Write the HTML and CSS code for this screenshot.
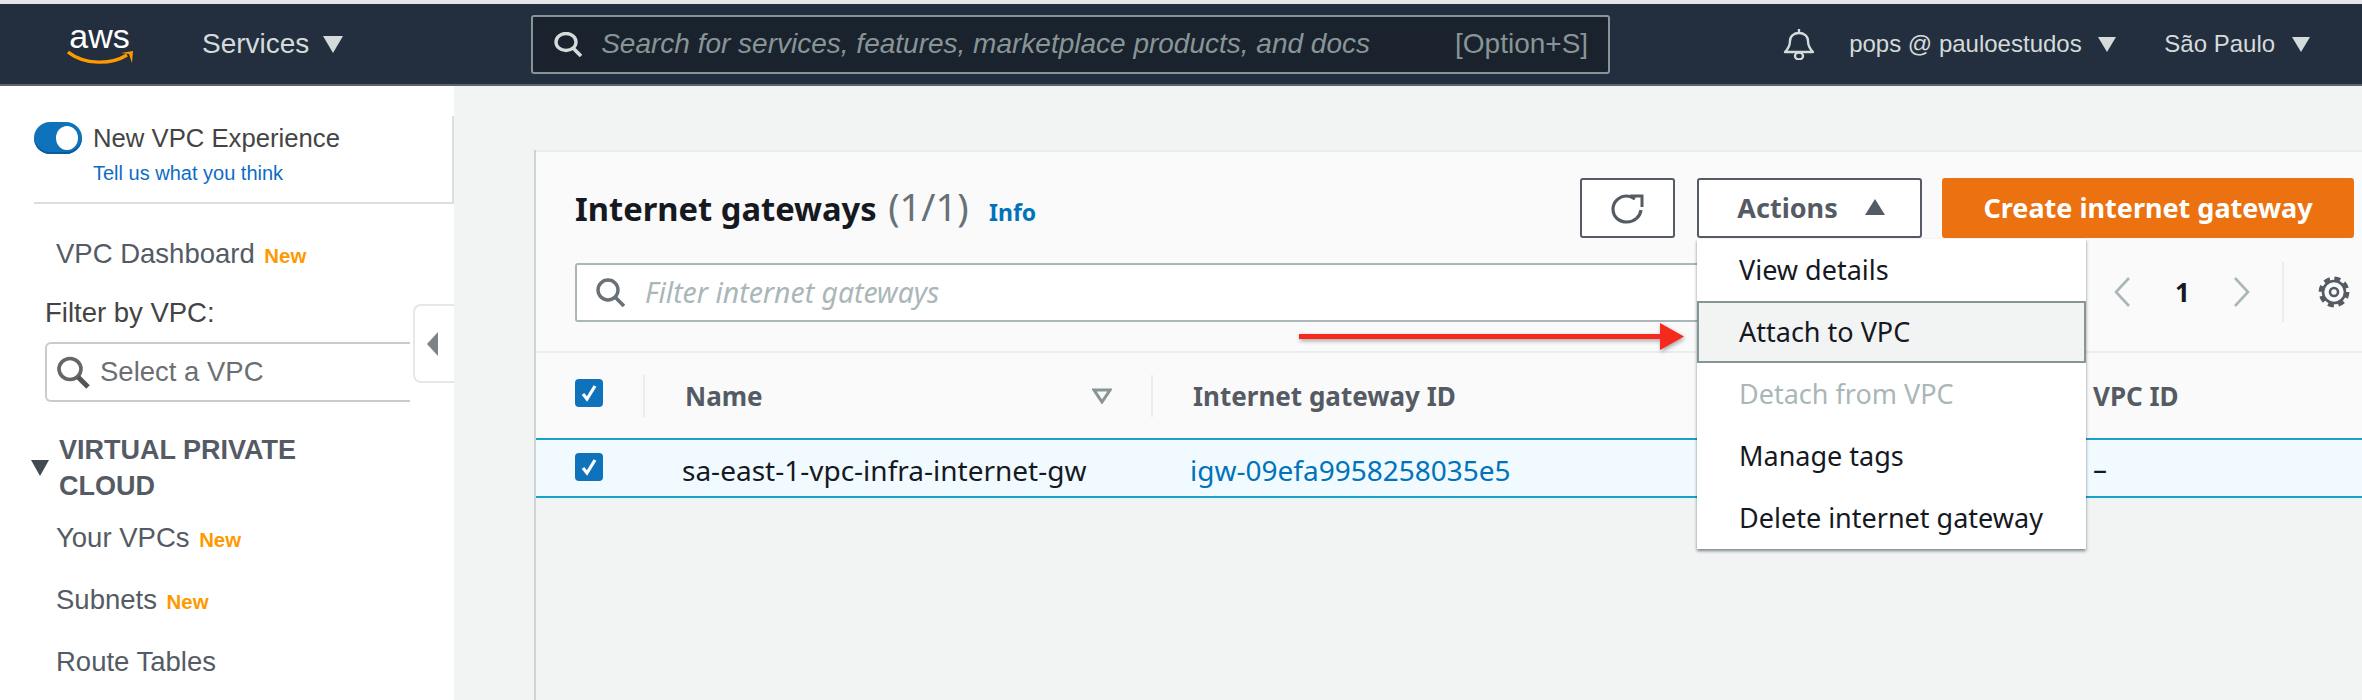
FILE: index.html
```html
<!DOCTYPE html>
<html lang="en">
<head>
<meta charset="UTF-8">
<meta name="viewport" content="width=device-width, initial-scale=1.0">
<title>Internet gateways</title>
<link rel="stylesheet" href="styles.css">
</head>
<body>

<header class="topnav">
  <a class="logo">
    <span class="logo-text">aws</span>
    <svg class="logo-smile" viewBox="0 0 67 15"><path d="M1 2C18 15 44 15 60 5" fill="none" stroke="#f90" stroke-width="3.4"/><path d="M54 3L66 1L65 13L62 4Z" fill="#f90"/></svg>
  </a>
  <div class="nav-services">Services <span class="caret caret-big"></span></div>
  <div class="nav-search">
    <svg class="nav-search-icon" viewBox="0 0 29 25"><ellipse cx="12" cy="10" rx="10" ry="8.5" fill="none" stroke="#d5dbdb" stroke-width="3.4"/><path d="M19 16L27 24" stroke="#d5dbdb" stroke-width="3.6"/></svg>
    <span class="nav-search-text">Search for services, features, marketplace products, and docs</span>
    <span class="nav-search-hint">[Option+S]</span>
  </div>
  <svg class="nav-bell" viewBox="0 0 34 32"><path d="M17 1V5M3 24C7 20 8 17 8 13C8 8 12 5 17 5C22 5 26 8 26 13C26 17 27 20 31 24Z" fill="none" stroke="#d5dbdb" stroke-width="2.4" stroke-linejoin="round"/><ellipse cx="17" cy="28" rx="4" ry="3.4" fill="none" stroke="#d5dbdb" stroke-width="2.4"/></svg>
  <div class="nav-user">pops @ pauloestudos <span class="caret"></span></div>
  <div class="nav-region">São Paulo <span class="caret"></span></div>
  <div class="nav-support">Support</div>
</header>

<div class="layout">
  <aside class="sidebar">
    <div class="vpc-experience">
      <div class="toggle-row">
        <span class="toggle"><span class="toggle-knob"></span></span>
        <span>New VPC Experience</span>
      </div>
      <a class="feedback">Tell us what you think</a>
    </div>

    <div class="side-link side-dashboard">VPC Dashboard <span class="new">New</span></div>
    <div class="filter-label">Filter by VPC:</div>
    <div class="vpc-select">
      <svg class="vpc-select-icon" viewBox="0 0 34 33"><ellipse cx="14" cy="13" rx="11" ry="10.5" fill="#fff" stroke="#666" stroke-width="3.6"/><path d="M22 21L32 31" stroke="#555" stroke-width="5"/></svg>
      <span>Select a VPC</span>
    </div>

    <div class="side-section">
      <span class="section-arrow"></span>
      <span class="section-title">VIRTUAL PRIVATE CLOUD</span>
    </div>
    <div class="side-link side-first">Your VPCs <span class="new">New</span></div>
    <div class="side-link">Subnets <span class="new">New</span></div>
    <div class="side-link">Route Tables</div>

    <div class="collapse-tab"><span class="collapse-arrow"></span></div>
  </aside>

  <main class="content">
    <section class="panel">
      <div class="panel-head">
        <div class="title-row">
          <h1 class="title">Internet gateways <span class="count">(1/1)</span> <a class="info">Info</a></h1>
          <div class="actions">
            <button class="btn btn-refresh">
              <svg viewBox="0 0 33 31" width="33" height="31"><path d="M24 6C21 4 18 3 16 3C8 3 2 9 2 16C2 24 8 29 16 29C23 29 29 24 30 17" fill="none" stroke="#545b64" stroke-width="3.2"/><path d="M19 3H31V14" fill="none" stroke="#545b64" stroke-width="3"/></svg>
            </button>
            <div class="dropdown">
              <button class="btn btn-actions">Actions <span class="caret-up"></span></button>
              <ul class="menu">
                <li>View details</li>
                <li class="menu-active">Attach to VPC</li>
                <li class="menu-disabled">Detach from VPC</li>
                <li>Manage tags</li>
                <li>Delete internet gateway</li>
              </ul>
            </div>
            <button class="btn btn-primary">Create internet gateway</button>
          </div>
        </div>

        <div class="filter-row">
          <div class="filter-input">
            <svg class="filter-icon" viewBox="0 0 29 29"><ellipse cx="12" cy="12" rx="10" ry="10" fill="none" stroke="#687078" stroke-width="3.4"/><path d="M19 19L28 28" stroke="#687078" stroke-width="3.6"/></svg>
            <span>Filter internet gateways</span>
          </div>
          <div class="pager">
            <svg class="chevron" viewBox="0 0 17 30"><path d="M15 1L2 15L15 29" fill="none" stroke="#aab7b8" stroke-width="2.6"/></svg>
            <span class="page-num">1</span>
            <svg class="chevron" viewBox="0 0 17 30"><path d="M2 1L15 15L2 29" fill="none" stroke="#aab7b8" stroke-width="2.6"/></svg>
            <span class="pager-sep"></span>
            <svg class="gear" viewBox="0 0 32 32"><circle cx="16" cy="16" r="11" fill="none" stroke="#545b64" stroke-width="2.6"/><circle cx="16" cy="16" r="13.4" fill="none" stroke="#545b64" stroke-width="4" stroke-dasharray="6 4.52"/><circle cx="16" cy="16" r="4" fill="none" stroke="#545b64" stroke-width="2.6"/></svg>
          </div>
        </div>
      </div>

      <div class="table-row table-head">
        <div class="cell-check"><span class="checkbox"><svg viewBox="0 0 28 28"><path d="M8 15L12 20L20 7" fill="none" stroke="#fff" stroke-width="3.2"/></svg></span></div>
        <div class="cell cell-name">Name <svg class="sort" viewBox="0 0 20 16"><path d="M2 2H18L10 14Z" fill="none" stroke="#879596" stroke-width="3"/></svg></div>
        <div class="cell cell-id">Internet gateway ID</div>
        <div class="cell-vpc">VPC ID</div>
      </div>

      <div class="table-row table-selected">
        <div class="cell-check"><span class="checkbox"><svg viewBox="0 0 28 28"><path d="M8 15L12 20L20 7" fill="none" stroke="#fff" stroke-width="3.2"/></svg></span></div>
        <div class="cell">sa-east-1-vpc-infra-internet-gw</div>
        <div class="cell"><a class="link">igw-09efa9958258035e5</a></div>
        <div class="cell-vpc">–</div>
      </div>

      <svg class="red-arrow" viewBox="0 0 385 27" width="385" height="27"><path d="M0 11H361V0L385 13.5L361 27V16H0Z" fill="#f5291c"/></svg>
    </section>
  </main>
</div>

</body>
</html>
```
FILE: styles.css
```css
html, body {
  margin: 0;
  height: 100%;
  overflow: hidden;
}
body {
  font-family: "Liberation Sans", Arial, sans-serif;
  background-color: #e4e6e8;
  padding-top: 4px;
  box-sizing: border-box;
}

/* top bar */
.topnav {
  display: flex;
  align-items: center;
  height: 80px;
  background-color: #232f3e;
  border-bottom: 2px solid #5b6570;
  color: #d5dbdb;
  white-space: nowrap;
}
.topnav > * {
  flex: none;
}
.logo {
  position: relative;
  display: block;
  width: 67px;
  height: 41px;
  margin-left: 67px;
}
.logo-text {
  display: block;
  font-size: 34px;
  line-height: 24px;
  color: #fff;
  text-align: center;
  margin-left: -2px;
}
.logo-smile {
  display: block;
  width: 67px;
  height: 15px;
  margin-top: 2px;
}
.nav-services {
  margin-left: 68px;
  font-size: 28px;
}
.caret {
  display: inline-block;
  width: 0;
  height: 0;
  margin-left: 10px;
  border-left: 9px solid transparent;
  border-right: 9px solid transparent;
  border-top: 15px solid #d5dbdb;
}
.caret-big {
  border-left-width: 10px;
  border-right-width: 10px;
  border-top-width: 17px;
  margin-left: 6px;
}
.nav-search {
  display: flex;
  align-items: center;
  width: 1079px;
  height: 59px;
  margin-left: 188px;
  padding: 0 20px 0 21px;
  box-sizing: border-box;
  background-color: #1a222d;
  border: 2px solid #87949a;
  border-radius: 3px;
  font-size: 28px;
  color: #879596;
}
.nav-search-icon {
  width: 29px;
  height: 25px;
  flex: none;
  margin-right: 18px;
}
.nav-search-text {
  font-style: italic;
}
.nav-search-hint {
  margin-left: auto;
}
.nav-bell {
  width: 34px;
  height: 32px;
  margin-left: 172px;
}
.nav-user {
  margin-left: 33px;
  font-size: 24px;
}
.nav-region {
  margin-left: 48px;
  font-size: 24px;
}
.nav-support {
  margin-left: 54px;
  font-size: 24px;
}

/* page */
.layout {
  display: flex;
  height: 614px;
  background-color: #f2f3f3;
}
.sidebar {
  position: relative;
  width: 454px;
  flex: none;
  background-color: #fff;
  color: #545b64;
  font-size: 27.5px;
}
.vpc-experience {
  margin: 30px 0 0 34px;
  padding-top: 6px;
  height: 80px;
  border-right: 2px solid #dcdfdf;
  border-bottom: 2px solid #dcdfdf;
}
.toggle-row {
  display: flex;
  align-items: center;
  gap: 11px;
  height: 32px;
  font-size: 25.7px;
  color: #444;
}
.toggle {
  display: block;
  position: relative;
  width: 48px;
  height: 32px;
  border-radius: 16px;
  background-color: #0f73bb;
  box-shadow: inset 0 -2px 0 #0b5c96;
}
.toggle-knob {
  position: absolute;
  top: 4px;
  right: 4px;
  width: 22px;
  height: 24px;
  border-radius: 50%;
  background-color: #fff;
}
.feedback {
  display: block;
  margin: 7px 0 0 59px;
  font-size: 20px;
  line-height: 24px;
  color: #0e6cc4;
}
.side-link {
  margin: 30px 0 0 56px;
  line-height: 32px;
}
.side-dashboard {
  margin-top: 34px;
}
.side-first {
  margin-top: 18px;
}
.new {
  margin-left: 2px;
  font-size: 20.4px;
  line-height: 1;
  font-weight: bold;
  color: #f90;
}
.filter-label {
  margin: 27px 0 0 45px;
  line-height: 32px;
  color: #444;
}
.vpc-select {
  display: flex;
  align-items: center;
  gap: 10px;
  width: 365px;
  height: 60px;
  margin: 13px 0 0 45px;
  padding-left: 9px;
  box-sizing: border-box;
  border: 2px solid #c9cccc;
  border-right: 0;
  border-radius: 6px 0 0 6px;
  color: #6b6f74;
}
.vpc-select-icon {
  width: 34px;
  height: 33px;
}
.side-section {
  display: flex;
  align-items: center;
  gap: 10px;
  margin: 30px 0 0 31px;
}
.section-arrow {
  width: 0;
  height: 0;
  flex: none;
  border-left: 9.5px solid transparent;
  border-right: 9.5px solid transparent;
  border-top: 16px solid #444a52;
}
.section-title {
  width: 320px;
  font-size: 27px;
  font-weight: bold;
  line-height: 36px;
}
.collapse-tab {
  position: absolute;
  top: 218px;
  left: 413px;
  display: flex;
  align-items: center;
  justify-content: center;
  width: 41px;
  height: 79px;
  box-sizing: border-box;
  padding-right: 4px;
  background-color: #fff;
  border: 2px solid #e6e8e8;
  border-right: 0;
  border-radius: 8px 0 0 8px;
}
.collapse-arrow {
  width: 0;
  height: 0;
  border-top: 12px solid transparent;
  border-bottom: 12px solid transparent;
  border-right: 11px solid #7b8288;
}

/* main panel */
.content {
  flex: 1;
  min-width: 0;
  padding: 64px 0 0 80px;
  font-family: "Noto Sans", "Open Sans", sans-serif;
}
.panel {
  position: relative;
  height: 100%;
  border-left: 2px solid #cfd3d3;
}
.panel-head {
  height: 203px;
  padding-left: 39px;
  padding-right: 8px;
  box-sizing: border-box;
  background-color: #fafafa;
  border-top: 2px solid #eaeded;
  border-bottom: 2px solid #eaeded;
}
.title-row {
  display: flex;
  align-items: center;
  justify-content: space-between;
  height: 60px;
  margin-top: 26px;
}
.title {
  margin: 0;
  font-size: 32.7px;
  font-weight: bold;
  color: #16191f;
}
.count {
  margin-left: 3px;
  font-size: 38px;
  font-weight: normal;
  line-height: 1;
  color: #687078;
}
.info {
  margin-left: 12px;
  font-size: 23px;
  color: #0073bb;
}
.actions {
  display: flex;
  gap: 20px;
}
.btn {
  display: block;
  height: 60px;
  box-sizing: border-box;
  border: 2px solid #545b64;
  border-radius: 3px;
  background-color: #fff;
  color: #545b64;
  font-family: inherit;
  font-size: 27px;
  font-weight: bold;
}
.btn-refresh {
  width: 95px;
  margin-right: 2px;
  padding: 0;
}
.btn-refresh svg {
  display: block;
  margin: 0 auto;
}
.btn-actions {
  width: 225px;
  padding: 0 0 2px 3px;
}
.btn-primary {
  width: 412px;
  padding: 0 0 2px;
  background-color: #ec7211;
  border-color: #ec7211;
  color: #fff;
}
.caret-up {
  display: inline-block;
  width: 0;
  height: 0;
  margin-left: 20px;
  vertical-align: 3px;
  border-left: 10px solid transparent;
  border-right: 10px solid transparent;
  border-bottom: 16px solid #545b64;
}
.dropdown {
  position: relative;
}
.menu {
  position: absolute;
  top: 61px;
  left: 0;
  z-index: 2;
  width: 389px;
  margin: 0;
  padding: 0;
  list-style: none;
  background-color: #fff;
  box-shadow: 0 2px 3px rgba(0, 28, 36, 0.5);
  font-size: 27px;
  color: #16191f;
}
.menu li {
  display: flex;
  align-items: center;
  height: 62px;
  padding: 0 0 2px 42px;
  box-sizing: border-box;
}
.menu .menu-active {
  padding: 0 0 2px 40px;
  background-color: #f2f3f3;
  border: 2px solid #879596;
}
.menu .menu-disabled {
  color: #aab7b8;
}
.filter-row {
  display: flex;
  align-items: center;
  margin-top: 24px;
}
.filter-input {
  display: flex;
  align-items: center;
  gap: 20px;
  width: 1130px;
  height: 59px;
  padding-left: 19px;
  box-sizing: border-box;
  background-color: #fff;
  border: 2px solid #aab7b8;
  border-radius: 3px;
  font-size: 28.4px;
  font-style: italic;
  color: #aab7b8;
}
.filter-icon {
  width: 29px;
  height: 29px;
}
.pager {
  display: flex;
  align-items: center;
  margin-left: auto;
  padding-right: 4px;
}
.chevron {
  width: 17px;
  height: 30px;
}
.page-num {
  width: 11px;
  margin: 0 47px 0 44px;
  font-size: 26px;
  font-weight: bold;
  color: #16191f;
}
.pager-sep {
  width: 2px;
  height: 60px;
  margin: 0 34px 0 32px;
  background-color: #eaeded;
}
.gear {
  width: 32px;
  height: 32px;
}

/* table */
.table-row {
  display: grid;
  grid-template-columns: 107px 508px 942px 1fr;
  align-items: center;
  font-size: 26px;
}
.table-head {
  height: 85px;
  background-color: #fafafa;
  font-weight: bold;
  color: #545b64;
}
.table-selected {
  height: 60px;
  box-sizing: border-box;
  background-color: #f1faff;
  border-top: 2px solid #16a2c9;
  border-bottom: 2px solid #16a2c9;
  font-size: 28px;
  color: #16191f;
}
.cell-check {
  padding-left: 39px;
}
.checkbox {
  display: block;
  width: 28px;
  height: 28px;
  margin-bottom: 5px;
  border-radius: 4px;
  background-color: #0f73bb;
}
.table-selected .checkbox {
  margin-bottom: 3px;
}
.checkbox svg {
  display: block;
}
.cell {
  padding-left: 39px;
}
.table-selected .cell {
  padding-top: 3px;
}
.table-head .cell {
  display: flex;
  align-items: center;
  justify-content: space-between;
  height: 42px;
  padding-left: 40px;
  border-left: 2px solid #eaeded;
}
.cell-name {
  padding-right: 39px;
}
.sort {
  width: 20px;
  height: 16px;
}
.link {
  color: #0073bb;
}
.red-arrow {
  position: absolute;
  top: 173px;
  left: 763px;
  filter: drop-shadow(1px 2px 2px rgba(0, 0, 0, 0.35));
}
```
